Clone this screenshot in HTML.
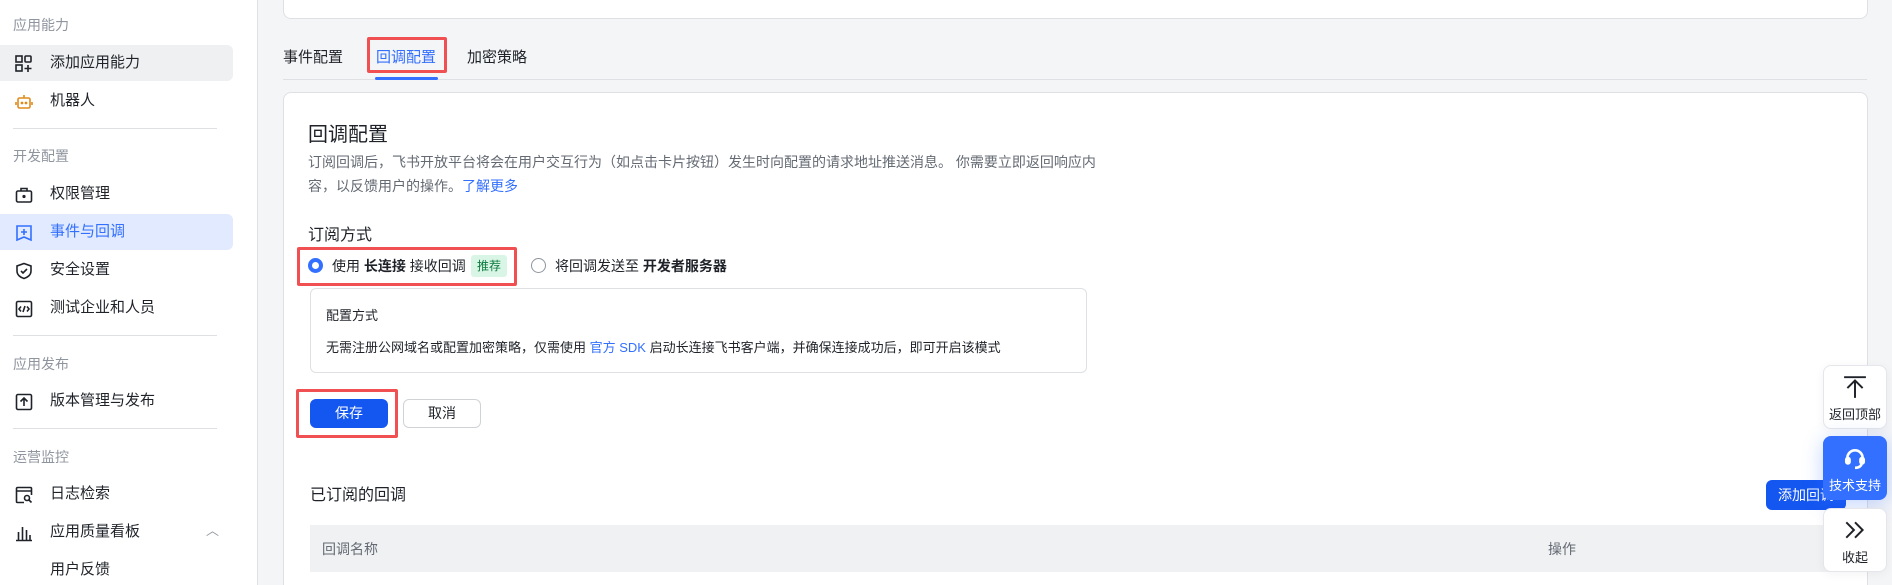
<!DOCTYPE html>
<html><head><meta charset="utf-8"><style>
*{box-sizing:border-box;margin:0;padding:0}
html{width:1892px;height:585px;overflow:hidden}
body{width:1892px;height:585px;overflow:hidden;background:#f4f5f7;font-family:"Liberation Sans","Noto Sans CJK SC",sans-serif;color:#1f2329;position:relative}
.abs{position:absolute}
#side{position:absolute;left:0;top:0;width:258px;height:585px;background:#fff;border-right:1px solid #dee0e3}
.grp{position:absolute;left:13px;font-size:14px;color:#8f959e}
.it{position:absolute;left:0;width:233px;height:36px;font-size:15px;line-height:36px;padding-left:50px;color:#1f2329;border-radius:0 6px 6px 0}
.it svg{position:absolute;left:15px;top:10px}
.div{position:absolute;left:13px;width:204px;height:1px;background:#dee0e3}
.card{position:absolute;background:#fff;border:1px solid #dee0e3;border-radius:8px}
.red{position:absolute;border:3px solid #f05052;border-radius:2px}
.fb{position:absolute;left:1823px;width:64px;height:64px;background:#fff;border:1px solid #e5e6eb;border-radius:8px;text-align:center;font-size:13px;color:#1f2329;box-shadow:0 2px 10px rgba(0,0,0,.05)}
</style></head><body>
<div id="side">
<div class="grp" style="top:15px">应用能力</div>
<div class="it" style="top:45px;background:#eff0f1"><svg width="18" height="18" viewBox="0 0 18 18" fill="none" stroke="#1f2329" stroke-width="1.6"><rect x="1" y="1" width="6" height="6"/><rect x="1" y="10" width="6" height="6"/><rect x="10" y="1" width="6" height="6" rx="1"/><path d="M13 10v7M9.5 13.5h7"/></svg>添加应用能力</div>
<div class="it" style="top:83px"><svg width="18" height="18" viewBox="0 0 18 18" fill="none" stroke="#e08a1c" stroke-width="1.6"><rect x="3" y="5" width="12" height="10" rx="1.5"/><path d="M9 2v3M1 9v3M17 9v3"/><circle cx="7" cy="10" r=".6" fill="#e08a1c"/><circle cx="11" cy="10" r=".6" fill="#e08a1c"/></svg>机器人</div>
<div class="div" style="top:128px"></div>
<div class="grp" style="top:146px">开发配置</div>
<div class="it" style="top:176px"><svg width="18" height="18" viewBox="0 0 18 18" fill="none" stroke="#1f2329" stroke-width="1.6"><rect x="1.5" y="5" width="15" height="11" rx="1.5"/><path d="M6 5V2.5h6V5"/><circle cx="9" cy="10.5" r=".8" fill="#1f2329"/></svg>权限管理</div>
<div class="it" style="top:214px;background:#e1eaff;color:#3370ff"><svg width="18" height="18" viewBox="0 0 18 18" fill="none" stroke="#3370ff" stroke-width="1.6"><path d="M2 2h14v14l-7-3-7 3z"/><path d="M9 5v6M6 8h6"/></svg>事件与回调</div>
<div class="it" style="top:252px"><svg width="18" height="18" viewBox="0 0 18 18" fill="none" stroke="#1f2329" stroke-width="1.6"><path d="M9 1.5l7 2.5v5c0 4-3.5 6.5-7 7.5-3.5-1-7-3.5-7-7.5V4z"/><path d="M6 9l2 2 4-4"/></svg>安全设置</div>
<div class="it" style="top:290px"><svg width="18" height="18" viewBox="0 0 18 18" fill="none" stroke="#1f2329" stroke-width="1.6"><rect x="1.5" y="1.5" width="15" height="15" rx="1.5"/><path d="M6 6.5L4 9l2 2.5M12 6.5L14 9l-2 2.5M10 6l-2 6"/></svg>测试企业和人员</div>
<div class="div" style="top:335px"></div>
<div class="grp" style="top:354px">应用发布</div>
<div class="it" style="top:383px"><svg width="18" height="18" viewBox="0 0 18 18" fill="none" stroke="#1f2329" stroke-width="1.6"><rect x="1.5" y="1.5" width="15" height="15" rx="1.5"/><path d="M9 13V5M5.5 8.5L9 5l3.5 3.5"/></svg>版本管理与发布</div>
<div class="div" style="top:428px"></div>
<div class="grp" style="top:447px">运营监控</div>
<div class="it" style="top:476px"><svg width="18" height="18" viewBox="0 0 18 18" fill="none" stroke="#1f2329" stroke-width="1.6"><path d="M9 16.5H2.5a1 1 0 01-1-1v-13a1 1 0 011-1h13a1 1 0 011 1V9M1.5 5h15"/><circle cx="12" cy="12" r="2.5"/><path d="M14 14l2.5 2.5"/></svg>日志检索</div>
<div class="it" style="top:514px"><svg width="18" height="18" viewBox="0 0 18 18" fill="none" stroke="#1f2329" stroke-width="1.6"><path d="M1 16.5h16M3.5 16V8M7.5 16V3M11.5 16V6M15 16v-5"/></svg>应用质量看板<span style="position:absolute;left:206px;top:-1px;color:#8f959e;font-size:13px">︿</span></div>
<div class="it" style="top:552px">用户反馈</div>
</div>

<div class="card" style="left:283px;top:-10px;width:1585px;height:29px"></div>
<div class="abs" style="left:283px;top:46px;font-size:15px">事件配置</div>
<div class="abs" style="left:376px;top:46px;font-size:15px;color:#3370ff">回调配置</div>
<div class="abs" style="left:467px;top:46px;font-size:15px">加密策略</div>
<div class="abs" style="left:283px;top:79px;width:1584px;height:1px;background:#dee0e3"></div>
<div class="abs" style="left:375px;top:77px;width:63px;height:3px;background:#3370ff;border-radius:2px"></div>
<div class="red" style="left:367px;top:37px;width:80px;height:36px"></div>

<div class="card" style="left:283px;top:92px;width:1585px;height:510px"></div>
<div class="abs" style="left:308px;top:118px;font-size:20px">回调配置</div>
<div class="abs" style="left:308px;top:150px;width:810px;font-size:14px;line-height:24px;color:#646a73">订阅回调后，飞书开放平台将会在用户交互行为（如点击卡片按钮）发生时向配置的请求地址推送消息。 你需要立即返回响应内容，以反馈用户的操作。<span style="color:#3370ff">了解更多</span></div>
<div class="abs" style="left:308px;top:221px;font-size:16px">订阅方式</div>
<div class="abs" style="left:308px;top:258px;width:15px;height:15px;border-radius:50%;border:4.5px solid #3370ff;background:#fff"></div>
<div class="abs" style="left:332px;top:256px;font-size:14px">使用 <b>长连接</b> 接收回调</div>
<div class="abs" style="left:471px;top:255px;width:36px;height:22px;background:#d9f5e6;color:#0c7a3e;font-size:12px;line-height:22px;text-align:center;border-radius:3px">推荐</div>
<div class="abs" style="left:531px;top:258px;width:15px;height:15px;border-radius:50%;border:1px solid #8f959e"></div>
<div class="abs" style="left:555px;top:256px;font-size:14px">将回调发送至 <b>开发者服务器</b></div>
<div class="red" style="left:297px;top:247px;width:220px;height:39px"></div>

<div class="abs" style="left:310px;top:288px;width:777px;height:85px;border:1px solid #dee0e3;border-radius:6px"></div>
<div class="abs" style="left:326px;top:305px;font-size:13px">配置方式</div>
<div class="abs" style="left:326px;top:337px;font-size:13px">无需注册公网域名或配置加密策略，仅需使用 <span style="color:#3370ff">官方 SDK</span> 启动长连接飞书客户端，并确保连接成功后，即可开启该模式</div>

<div class="abs" style="left:310px;top:399px;width:78px;height:29px;background:#1456f0;border-radius:6px;color:#fff;font-size:14px;line-height:29px;text-align:center">保存</div>
<div class="red" style="left:296px;top:389px;width:102px;height:49px"></div>
<div class="abs" style="left:403px;top:399px;width:78px;height:29px;border:1px solid #d0d3d6;border-radius:6px;font-size:14px;line-height:27px;text-align:center">取消</div>

<div class="abs" style="left:310px;top:481px;font-size:16px">已订阅的回调</div>
<div class="abs" style="left:1766px;top:480px;width:80px;height:30px;background:#1456f0;border-radius:6px;color:#fff;font-size:14px;line-height:30px;padding-left:12px;overflow:hidden;white-space:nowrap">添加回调</div>
<div class="abs" style="left:310px;top:525px;width:1557px;height:47px;background:#f0f1f3"></div>
<div class="abs" style="left:322px;top:539px;font-size:14px;color:#646a73">回调名称</div>
<div class="abs" style="left:1548px;top:539px;font-size:14px;color:#646a73">操作</div>

<div class="fb" style="top:365px"><svg width="24" height="24" viewBox="0 0 22 22" fill="none" stroke="#1f2329" stroke-width="1.8" style="margin-top:9px"><path d="M1 2h20M11 21V6M4 12l7-7 7 7"/></svg><div style="margin-top:2px">返回顶部</div></div>
<div class="fb" style="top:436px;background:#3370ff;border-color:#3370ff;color:#fff;box-shadow:0 4px 20px rgba(51,112,255,.3)"><svg width="24" height="24" viewBox="0 0 22 22" fill="none" stroke="#fff" stroke-width="2.4" style="margin-top:9px"><path d="M4 13V11a7 7 0 0114 0v2"/><rect x="3" y="11" width="3" height="5" rx="1.5" fill="#fff"/><rect x="16" y="11" width="3" height="5" rx="1.5" fill="#fff"/><path d="M17 16c0 2-2 4-6 4"/></svg><div style="margin-top:2px">技术支持</div></div>
<div class="fb" style="top:508px"><svg width="24" height="24" viewBox="0 0 22 22" fill="none" stroke="#1f2329" stroke-width="1.8" style="margin-top:9px"><path d="M3 4l7 7-7 7M11 4l7 7-7 7"/></svg><div style="margin-top:2px">收起</div></div>
</body></html>
